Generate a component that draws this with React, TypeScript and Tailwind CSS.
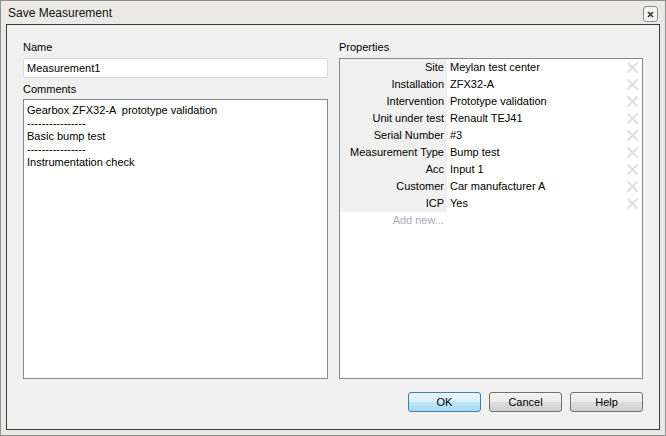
import React from 'react'

const properties: Array<[string, string]> = [
  ['Site', 'Meylan test center'],
  ['Installation', 'ZFX32-A'],
  ['Intervention', 'Prototype validation'],
  ['Unit under test', 'Renault TEJ41'],
  ['Serial Number', '#3'],
  ['Measurement Type', 'Bump test'],
  ['Acc', 'Input 1'],
  ['Customer', 'Car manufacturer A'],
  ['ICP', 'Yes'],
]

const comments = [
  'Gearbox ZFX32-A  prototype validation',
  '----------------',
  'Basic bump test',
  '----------------',
  'Instrumentation check',
]

function RemoveIcon() {
  return (
    <svg width="11" height="11" viewBox="0 0 11 11" className="shrink-0">
      <path d="M1 1 L10 10 M10 1 L1 10" stroke="#dedede" strokeWidth="1.8" strokeLinecap="round" />
    </svg>
  )
}

function DialogButton({ label, primary }: { label: string; primary?: boolean }) {
  return (
    <button
      className={`w-[73px] h-[20px] rounded-[3px] border text-[11px] leading-none text-black ${
        primary
          ? 'border-[#3c7fb1] bg-[linear-gradient(#eaf6fd_0%,#d9f0fc_50%,#bee6fd_51%,#a7d9f5_100%)]'
          : 'border-[#707070] bg-[linear-gradient(#f2f2f2_0%,#ebebeb_50%,#dddddd_51%,#cfcfcf_100%)]'
      }`}
    >
      {label}
    </button>
  )
}

export default function App() {
  return (
    <div className="w-[666px] h-[436px] flex flex-col bg-[#ebe9e5] border border-[#8e8e8e] font-['Liberation_Sans',Arial,sans-serif] text-[11px] text-black">
      {/* Title bar */}
      <div className="h-[23px] flex items-center justify-between pl-[7px] pr-[7px]">
        <span className="text-[12px] leading-none text-[#111]">Save Measurement</span>
        <div className="w-[15px] h-[16px] mt-[3px] flex items-center justify-center rounded-[3px] border border-[#8a8a8a] bg-[#f4f4f4]">
          <svg width="7" height="7" viewBox="0 0 7 7">
            <path d="M1 1 L6 6 M6 1 L1 6" stroke="#333" strokeWidth="1.6" />
          </svg>
        </div>
      </div>

      {/* Client area */}
      <div className="flex-1 mx-[5px] mb-[5px] border border-[#3a3a3a] bg-[#f0f0f0] flex flex-col px-[16px] pt-[16px]">
        <div className="flex gap-[11px]">
          {/* Left column */}
          <div className="w-[305px] flex flex-col">
            <div className="h-[13px] leading-[13px]">Name</div>
            <div className="mt-[4px] h-[20px] rounded-[2px] border border-[#d6dae0] bg-white flex items-center px-[3px]">
              Measurement1
            </div>
            <div className="mt-[5px] h-[13px] leading-[13px]">Comments</div>
            <div className="mt-[3px] h-[280px] border border-[#828790] bg-white pl-[3px] pt-[4px] leading-[13px] whitespace-pre">
              {comments.map((line, i) => (
                <div key={i}>{line}</div>
              ))}
            </div>
          </div>

          {/* Right column */}
          <div className="w-[304px] flex flex-col">
            <div className="h-[13px] leading-[13px]">Properties</div>
            <div className="mt-[4px] h-[321px] border border-[#828790] bg-white flex flex-col">
              {properties.map(([key, value]) => (
                <div key={key} className="h-[17px] flex leading-[17px]">
                  <div className="w-[107px] shrink-0 bg-[#f0f0f0] text-right pr-[3px] whitespace-nowrap">{key}</div>
                  <div className="flex-1 flex items-center pl-[3px] pr-[4px]">
                    <span className="flex-1">{value}</span>
                    <RemoveIcon />
                  </div>
                </div>
              ))}
              <div className="h-[17px] flex leading-[17px]">
                <div className="w-[107px] shrink-0 text-right pr-[3px] text-[#a9a9bb]">Add new...</div>
              </div>
            </div>
          </div>
        </div>

        {/* Buttons */}
        <div className="mt-[13px] flex justify-end gap-[8px]">
          <DialogButton label="OK" primary />
          <DialogButton label="Cancel" />
          <DialogButton label="Help" />
        </div>
      </div>
    </div>
  )
}
